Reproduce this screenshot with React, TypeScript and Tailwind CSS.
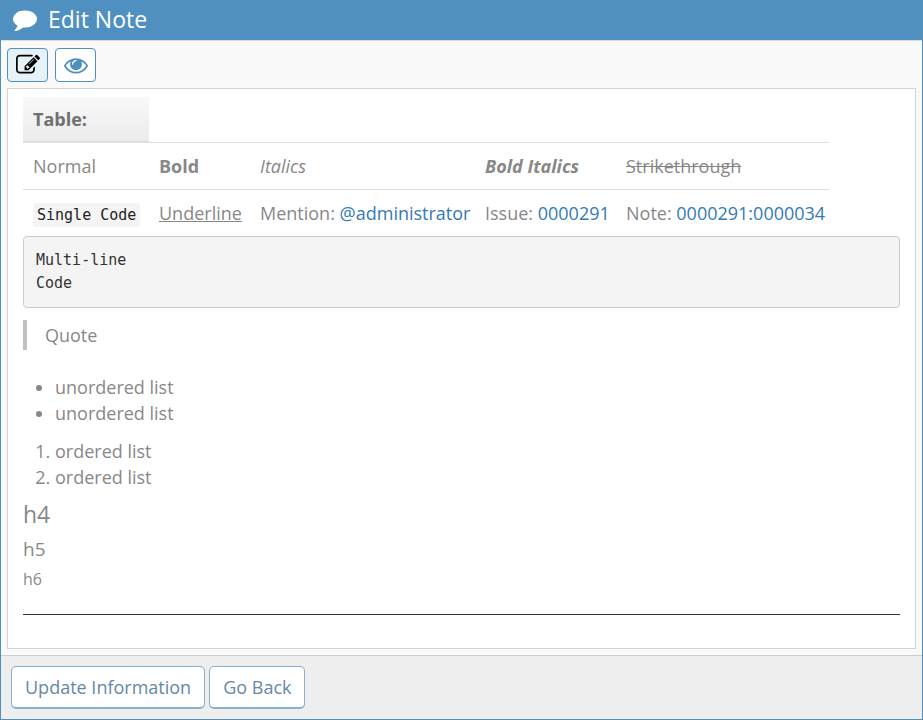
import type { ReactNode } from "react";

function FaIcon({ d, className }: { d: string; className: string }) {
  return (
    <svg viewBox="0 0 1792 1792" fill="currentColor" aria-hidden="true" className={className}>
      <path d={d} />
    </svg>
  );
}

const COMMENT =
  "M1792 896q0 174-120 321.5t-326 233-450 85.5q-70 0-145-8-198 175-460 242-49 14-114 22-17 2-30.5-9t-17.5-29v-1q-3-4-.5-12t2-10 4.500-9.500l6-9 7-8.500 8-9q7-8 31-34.500t34.500-38 31-39.500 32.500-51 27-59 26-76q-157-89-247.500-220t-90.500-281q0-130 71-248.500t191-204.500 286-136.500 348-50.500q244 0 450 85.500t326 233 120 321.500z";
const PENCIL_SQUARE =
  "M888 1184l116-116-152-152-116 116v56h96v96h56zm440-720q-16-16-33 1l-350 350q-17 17-1 33t33-1l350-350q17-17 1-33zm80 594v190q0 119-84.500 203.500t-203.500 84.500h-832q-119 0-203.500-84.500t-84.500-203.500v-832q0-119 84.500-203.500t203.500-84.500h832q63 0 117 25 15 7 18 23 3 17-9 29l-49 49q-14 14-32 8-23-6-45-6h-832q-66 0-113 47t-47 113v832q0 66 47 113t113 47h832q66 0 113-47t47-113v-126q0-13 9-22l64-64q15-15 35-7t20 29zm-96-738l288 288-672 672h-288v-288zm444 132l-92 92-288-288 92-92q28-28 68-28t68 28l152 152q28 28 28 68t-28 68z";
const EYE =
  "M1664 960q-152-236-381-353 61 104 61 225 0 185-131.500 316.500t-316.500 131.500-316.500-131.500-131.500-316.500q0-121 61-225-229 117-381 353 133 205 333.500 326.500t434.500 121.500 434.500-121.500 333.500-326.500zm-720-384q0-20-14-34t-34-14q-125 0-214.500 89.500t-89.500 214.500q0 20 14 34t34 14 34-14 14-34q0-86 61-147t147-61q20 0 34-14t14-34zm848 384q0 34-20 69-140 230-376.500 368.500t-499.500 138.500-499.500-139-376.500-368q-20-35-20-69t20-69q140-229 376.500-368t499.500-139 499.500 139 376.500 368q20 35 20 69z";

function Cell({ children }: { children?: ReactNode }) {
  return (
    <td className="border-t border-[#ddd] py-[10px] pr-1 pl-[10px] align-top whitespace-nowrap">
      {children}
    </td>
  );
}

function Link({ children }: { children: ReactNode }) {
  return (
    <a href="#" className="text-[#337ab7] hover:underline">
      {children}
    </a>
  );
}

export default function App() {
  return (
    <div className="flex min-h-screen flex-col border border-t-0 border-[#5090c1] bg-[#f9f9f9] font-['Open_Sans','Noto_Sans',sans-serif] text-[18px] leading-[26px] text-[#888]">
      <header className="flex h-[41px] items-center gap-[11px] border-b border-[#ddd] bg-[#5090c1] px-3 pb-[2px] text-white">
        <FaIcon d={COMMENT} className="size-6" />
        <h1 className="text-[23px] leading-8">Edit Note</h1>
      </header>

      <main className="flex grow flex-col px-[6px] pt-[7px] pb-[6px]">
        <div className="mb-[6px] flex gap-[7px]">
          <button
            type="button"
            aria-label="Edit"
            className="flex h-[34px] w-[41px] items-center justify-center rounded border border-[#5090c1] bg-[#e6f2f8] text-black"
          >
            <FaIcon d={PENCIL_SQUARE} className="size-6" />
          </button>
          <button
            type="button"
            aria-label="Preview"
            className="flex h-[34px] w-[41px] items-center justify-center rounded border border-[#5090c1] bg-white text-[#5090c1]"
          >
            <FaIcon d={EYE} className="size-6" />
          </button>
        </div>

        <article className="grow border border-[#d3d3d3] bg-white px-[15px] pt-2">
          <table className="border-collapse text-left">
            <colgroup>
              <col className="w-[126px]" />
              <col className="w-[101px]" />
              <col className="w-[225px]" />
              <col className="w-[141px]" />
              <col className="w-[213px]" />
            </colgroup>
            <thead>
              <tr>
                <th
                  scope="col"
                  className="border-b-2 border-[#ddd] bg-linear-to-b from-[#f8f8f8] to-[#ececec] px-[10px] py-[9px] font-bold text-[#707070]"
                >
                  Table:
                </th>
              </tr>
            </thead>
            <tbody>
              <tr>
                <Cell>Normal</Cell>
                <Cell>
                  <strong>Bold</strong>
                </Cell>
                <Cell>
                  <em>Italics</em>
                </Cell>
                <Cell>
                  <strong>
                    <em>Bold Italics</em>
                  </strong>
                </Cell>
                <Cell>
                  <del>Strikethrough</del>
                </Cell>
              </tr>
              <tr>
                <Cell>
                  <code className="rounded bg-[#f4f4f4] px-1 py-[3px] font-['DejaVu_Sans_Mono',monospace] text-[15px] leading-4 text-[#222]">
                    Single Code
                  </code>
                </Cell>
                <Cell>
                  <u>Underline</u>
                </Cell>
                <Cell>
                  Mention: <Link>@administrator</Link>
                </Cell>
                <Cell>
                  Issue: <Link>0000291</Link>
                </Cell>
                <Cell>
                  Note: <Link>0000291:0000034</Link>
                </Cell>
              </tr>
            </tbody>
          </table>

          <pre className="rounded border border-[#ccc] bg-[#f4f4f4] p-3 font-['DejaVu_Sans_Mono',monospace] text-[15px] leading-[23px] text-[#333]">
            {"Multi-line\nCode"}
          </pre>

          <blockquote className="mt-3 border-l-4 border-[#c0c0c0] py-[2px] pl-[18px]">Quote</blockquote>

          <ul className="mt-6 list-disc pl-8">
            <li>unordered list</li>
            <li>unordered list</li>
          </ul>
          <ol className="mt-3 list-decimal pl-8">
            <li>ordered list</li>
            <li>ordered list</li>
          </ol>

          <h4 className="mt-2 text-[23px] leading-8">h4</h4>
          <h5 className="mt-1 text-[19px] leading-[30px]">h5</h5>
          <h6 className="text-[16px] leading-[30px]">h6</h6>
          <hr className="mt-5 border-[#333]" />
        </article>
      </main>

      <footer className="flex gap-1 border-t border-[#ccc] bg-[#eee] p-[10px]">
        <button
          type="button"
          className="h-[43px] rounded-[5px] border border-b-2 border-[#8aafce] bg-white px-[13px] text-[#6688a6]"
        >
          Update Information
        </button>
        <button
          type="button"
          className="h-[43px] rounded-[5px] border border-b-2 border-[#8aafce] bg-white px-[13px] text-[#6688a6]"
        >
          Go Back
        </button>
      </footer>
    </div>
  );
}
